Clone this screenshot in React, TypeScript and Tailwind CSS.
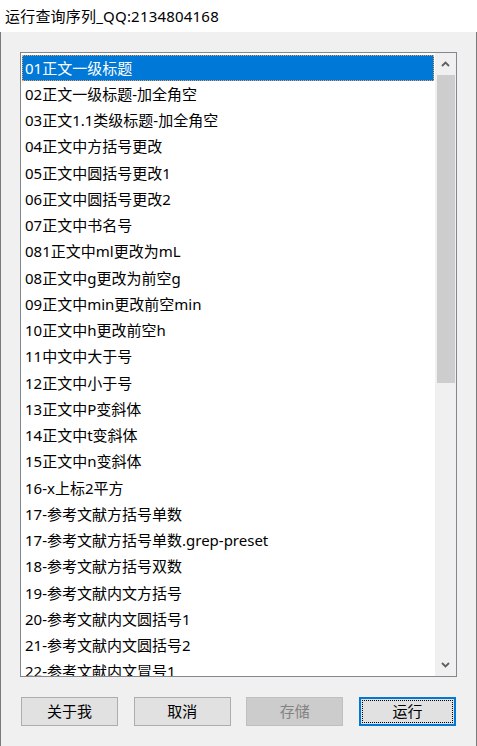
import React from "react";

const items = [
  "01正文一级标题",
  "02正文一级标题-加全角空",
  "03正文1.1类级标题-加全角空",
  "04正文中方括号更改",
  "05正文中圆括号更改1",
  "06正文中圆括号更改2",
  "07正文中书名号",
  "081正文中ml更改为mL",
  "08正文中g更改为前空g",
  "09正文中min更改前空min",
  "10正文中h更改前空h",
  "11中文中大于号",
  "12正文中小于号",
  "13正文中P变斜体",
  "14正文中t变斜体",
  "15正文中n变斜体",
  "16-x上标2平方",
  "17-参考文献方括号单数",
  "17-参考文献方括号单数.grep-preset",
  "18-参考文献方括号双数",
  "19-参考文献内文方括号",
  "20-参考文献内文圆括号1",
  "21-参考文献内文圆括号2",
  "22-参考文献内文冒号1",
];

const Arrow = ({ up }: { up?: boolean }) => (
  <svg width="9" height="6" viewBox="0 0 9 6">
    <path
      d={up ? "M1 5 L4.5 1.5 L8 5" : "M1 1 L4.5 4.5 L8 1"}
      fill="none"
      stroke="#606060"
      strokeWidth="1.8"
    />
  </svg>
);

const App = () => {
  return (
    <div className="w-[477px] h-[746px] flex flex-col overflow-hidden font-['Noto_Sans','Noto_Sans_CJK_SC',sans-serif] text-[15px] text-black">
      {/* Title bar */}
      <div className="h-[32px] bg-white flex items-center px-[5px] leading-none shrink-0 tracking-[0.2px]">
        运行查询序列_QQ:2134804168
      </div>

      {/* Body */}
      <div className="flex-1 bg-[#f0f0f0] border-x border-[#7a7a7a] pt-[20px] pl-[19px]">
        {/* List box */}
        <div className="w-[437px] h-[625px] border border-[#828790] bg-white flex">
          <div className="flex-1 px-[1px] pt-[2px] overflow-hidden">
            {items.map((item, i) => (
              <div
                key={i}
                className={
                  i === 0
                    ? "h-[26.25px] flex items-center pl-[2px] leading-none bg-[#0078d7] text-white border border-dotted border-[#f5a04a]"
                    : "h-[26.25px] flex items-center pl-[3px] leading-none whitespace-nowrap"
                }
              >
                {item}
              </div>
            ))}
          </div>

          {/* Scrollbar */}
          <div className="w-[21px] bg-[#f0f0f0] flex flex-col items-center">
            <div className="h-[22px] w-full flex items-center justify-center">
              <Arrow up />
            </div>
            <div className="w-[18px] h-[308px] bg-[#cdcdcd]" />
            <div className="flex-1" />
            <div className="h-[22px] w-full flex items-center justify-center">
              <Arrow />
            </div>
          </div>
        </div>

        {/* Buttons */}
        <div className="w-[435px] ml-[1px] mt-[20px] flex justify-between">
          <button className="w-[97px] h-[29px] bg-[#e1e1e1] border border-[#adadad] leading-none">
            关于我
          </button>
          <button className="w-[97px] h-[29px] bg-[#e1e1e1] border border-[#adadad] leading-none">
            取消
          </button>
          <button
            disabled
            className="w-[97px] h-[29px] bg-[#cccccc] border border-[#bfbfbf] text-[#838383] leading-none"
          >
            存储
          </button>
          <button className="w-[97px] h-[29px] bg-[#e1e1e1] border-2 border-[#0078d7] p-[1px] leading-none">
            <div className="w-full h-full border border-dotted border-black flex items-center justify-center">
              运行
            </div>
          </button>
        </div>
      </div>
    </div>
  );
};

export default App;
